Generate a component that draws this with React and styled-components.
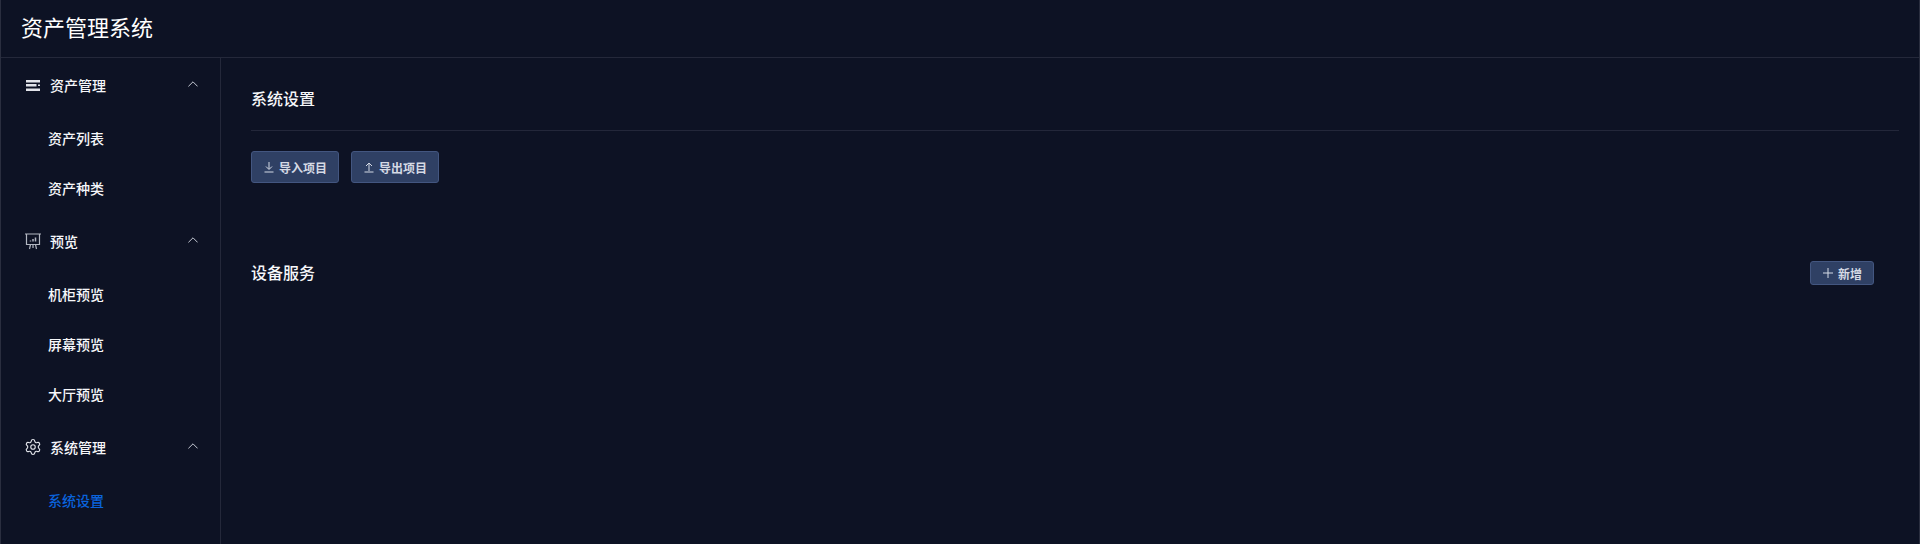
import React from 'react';
import styled, { createGlobalStyle } from 'styled-components';
import { Settings } from 'lucide-react';

const Global = createGlobalStyle`
  html, body { margin: 0; padding: 0; background: #0d1224; }
  body { font-family: Inter, "Noto Sans CJK SC", sans-serif; }
  * { box-sizing: border-box; }
`;

const Shell = styled.div`
  width: 1920px; height: 544px; overflow: hidden; background: #0d1224;
  border-left: 1px solid #2a2e3f; border-right: 1px solid #2a2e3f;
  display: flex; flex-direction: column;
`;
const Header = styled.header`
  height: 58px; flex: none; padding: 0 20px; display: flex; align-items: center;
  border-bottom: 1px solid #24283a;
`;
const Brand = styled.h1`
  margin: 0 0 1px; font-size: 22px; line-height: 30px; font-weight: 400; color: #ffffff;
`;
const Body = styled.div`flex: 1; display: flex; min-height: 0;`;
const Sidebar = styled.aside`
  width: 220px; flex: none; border-right: 1px solid #24283a; padding-top: 2px;
`;
const Group = styled.div`padding-bottom: 3px;`;
const GroupTitle = styled.div`
  height: 50px; margin-bottom: 3px; display: flex; align-items: center; padding: 0 22px 0 23px;
  font-size: 14px; font-weight: 500; color: #f6f7fa;
`;
const IconSlot = styled.span`
  width: 18px; height: 18px; margin-right: 8px; display: flex; align-items: center; justify-content: center;
  flex: none; color: #e2e4ea;
`;
const GroupLabel = styled.span`flex: 1;`;
const Chevron = styled.svg`
  width: 10px; height: 6px; margin-top: -2px; color: #c5c9d3; flex: none;
`;
const Item = styled.div`
  height: 50px; display: flex; align-items: center; padding-left: 47px;
  font-size: 14px; font-weight: 500; color: ${p => (p.$active ? '#0a63dc' : '#f6f7fa')};
`;
const Main = styled.main`flex: 1; padding: 0 20px 0 30px; min-width: 0;`;
const SectionHead = styled.div`
  height: 73px; padding-top: 10px; display: flex; align-items: center; border-bottom: 1px solid #23273a;
`;
const Title = styled.h2`
  margin: 0; font-size: 16px; font-weight: 500; color: #f6f7fa; line-height: 24px;
`;
const Buttons = styled.div`display: flex; gap: 12px; padding-top: 20px;`;
const Btn = styled.button`
  height: ${p => (p.$small ? '24px' : '32px')};
  width: ${p => (p.$small ? '64px' : '88px')};
  display: inline-flex; align-items: center; justify-content: center; gap: 4px; padding: 0;
  background: #2f4064; border: 1px solid #435680; border-radius: 3px;
  color: #d5dae5; font: 600 12px Inter, "Noto Sans CJK SC", sans-serif;
`;
const ServiceRow = styled.div`
  margin-top: 78px; height: 24px; display: flex; align-items: center; justify-content: space-between;
  padding-right: 25px;
`;
const ServiceTitle = styled.h2`
  margin: -2px 0 0; font-size: 16px; font-weight: 500; color: #f6f7fa;
`;

const ListIcon = () => (
  <svg width="14" height="11" viewBox="0 0 14 11" fill="currentColor">
    <rect x="0" y="0" width="14" height="2.500" />
    <rect x="0" y="4" width="10.500" height="2.500" />
    <rect x="12" y="4.500" width="2" height="1.500" />
    <rect x="0" y="8.500" width="14" height="2.500" />
  </svg>
);
const BoardIcon = () => (
  <svg width="18" height="18" viewBox="0 0 18 18" fill="none" stroke="#b3b7c2" strokeWidth="1.200">
    <path d="M1 2h16M2.500 2v10.500h13V2M6.500 12.500 5.500 17M11.500 12.500l1 4.500M9 12.500V16" />
    <path d="M6.500 9.500V8.500M9 9.500V7M11.500 9.500V5.500" strokeWidth="1.500" />
  </svg>
);
const Up = () => (
  <Chevron viewBox="0 0 10 6" fill="none" stroke="currentColor" strokeWidth="1">
    <path d="M.4 5.400 5 .8l4.600 4.600" />
  </Chevron>
);
const Download = () => (
  <svg width="12" height="12" viewBox="0 0 12 12" fill="none" stroke="currentColor" strokeWidth="1">
    <path d="M6 1v7M3 5.500 6 8.500l3-3M1.500 11h9" />
  </svg>
);
const Upload = () => (
  <svg width="12" height="12" viewBox="0 0 12 12" fill="none" stroke="currentColor" strokeWidth="1">
    <path d="M6 10V2.500M3 5 6 2l3 3M1.500 11h9" />
  </svg>
);
const Plus = () => (
  <svg width="12" height="12" viewBox="0 0 12 12" fill="none" stroke="currentColor" strokeWidth="1">
    <path d="M6 1v10M1 6h10" />
  </svg>
);

const groups = [
  { title: '资产管理', icon: <ListIcon />, items: ['资产列表', '资产种类'] },
  { title: '预览', icon: <BoardIcon />, items: ['机柜预览', '屏幕预览', '大厅预览'] },
  { title: '系统管理', icon: <Settings size={18} strokeWidth={1.500} />, items: ['系统设置'], active: '系统设置' },
];

export default function App() {
  return (
    <Shell>
      <Global />
      <Header><Brand>资产管理系统</Brand></Header>
      <Body>
        <Sidebar>
          {groups.map(g => (
            <Group key={g.title}>
              <GroupTitle>
                <IconSlot>{g.icon}</IconSlot>
                <GroupLabel>{g.title}</GroupLabel>
                <Up />
              </GroupTitle>
              {g.items.map(i => <Item key={i} $active={i === g.active}>{i}</Item>)}
            </Group>
          ))}
        </Sidebar>
        <Main>
          <SectionHead><Title>系统设置</Title></SectionHead>
          <Buttons>
            <Btn><Download />导入项目</Btn>
            <Btn><Upload />导出项目</Btn>
          </Buttons>
          <ServiceRow>
            <ServiceTitle>设备服务</ServiceTitle>
            <Btn $small><Plus />新增</Btn>
          </ServiceRow>
        </Main>
      </Body>
    </Shell>
  );
}
